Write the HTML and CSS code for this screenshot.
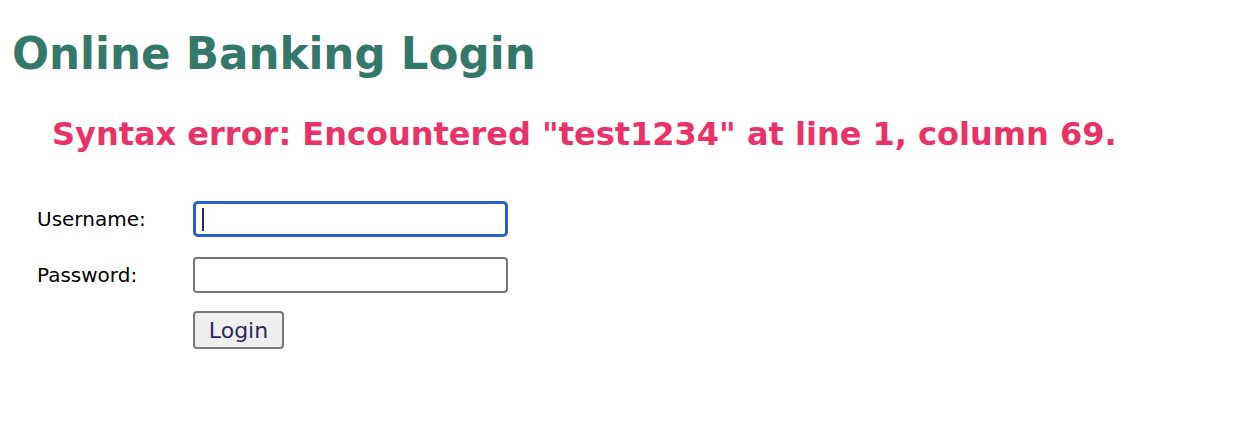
FILE: index.html
```html
<!DOCTYPE html>
<html>
<head>
<meta charset="utf-8">
<link rel="stylesheet" href="styles.css">
</head>
<body>
<div class="page">
  <h1 class="title">Online Banking Login</h1>
  <p class="error">Syntax error: Encountered "test1234" at line 1, column 69.</p>
  <form class="login">
    <label class="label" for="u">Username:</label>
    <div class="field focused"><span class="caret"></span></div>
    <label class="label" for="p">Password:</label>
    <div class="field"></div>
    <span></span>
    <div><button type="button" class="btn">Login</button></div>
  </form>
</div>
</body>
</html>
```

FILE: styles.css
```css
html, body { margin: 0; padding: 0; background: #fff; }
body { font-family: "DejaVu Sans", Verdana, sans-serif; }
.page { padding: 24px 0 0 12px; }
.title {
  margin: 0;
  font-size: 43.6px;
  font-weight: bold;
  color: #34786a;
  line-height: 60px;
}
.error {
  margin: 30px 0 0 40px;
  font-size: 32px;
  font-weight: bold;
  color: #ea3268;
  line-height: 40px;
}
.login {
  margin: 47px 0 0 25px;
  display: grid;
  grid-template-columns: 156px 315px;
  row-gap: 20px;
  align-items: center;
}
.label { font-size: 20px; color: #000; }
.field {
  box-sizing: border-box;
  height: 36px;
  width: 315px;
  border: 2px solid #767676;
  border-radius: 4px;
  position: relative;
}
.field.focused { border: 3px solid #2b5fc9; border-radius: 5px; }
.caret {
  position: absolute;
  left: 6px; top: 4px;
  width: 2px; height: 23px;
  background: #2a2a55;
}
.btn {
  box-sizing: border-box;
  width: 91px; height: 38px;
  background: #efeff0;
  border: 2px solid #7a7a7a;
  border-radius: 4px;
  font-family: "DejaVu Sans", Verdana, sans-serif;
  font-size: 22px;
  color: #2b2a5f;
  padding: 0;
  margin-top: -2px;
}
```
